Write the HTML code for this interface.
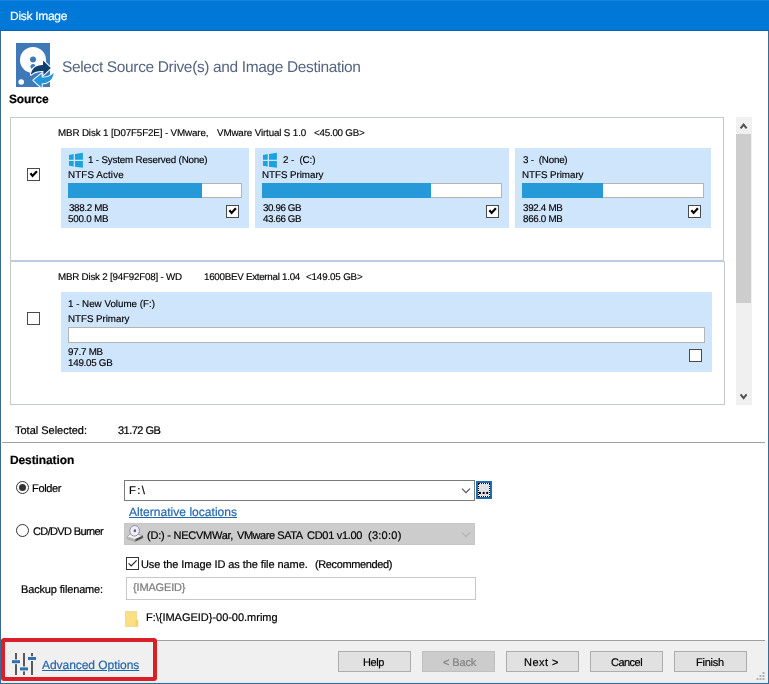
<!DOCTYPE html>
<html lang="en">
<head>
<meta charset="utf-8">
<title>Disk Image</title>
<style>
*{box-sizing:border-box;margin:0;padding:0}
html,body{width:769px;height:684px;overflow:hidden;background:#fff}
body{position:relative;font-family:"Liberation Sans",sans-serif;font-size:11px;color:#141414}
.abs,.t,svg{position:absolute}
.t{white-space:pre;line-height:1;color:#000;will-change:transform;text-rendering:geometricPrecision;-webkit-text-stroke:.2px currentColor}
#titlebar{left:0;top:0;width:769px;height:31px;background:#0078d7;border-bottom:1px solid #0a63b4;border-top:1px solid #1282dd}
#bl{left:0;top:31px;width:1px;height:653px;background:#3a6b94}
#br{left:768px;top:31px;width:1px;height:653px;background:#3a6b94}
#bb{left:0;top:683px;width:769px;height:1px;background:#3a6b94}
.panel{border:1px solid #c4c9ce;background:#fff}
.part{background:#cfe5fc}
.bar{height:15px;background:#fff;border:1px solid #b4b4b4}
.fill{position:absolute;left:-1px;top:-1px;bottom:-1px;background:#269ad8}
.cb{width:13px;height:13px;background:#fff;border:1px solid #4a4a4a}
.cb svg{left:0;top:0}
.radio{width:13px;height:13px;border-radius:50%;background:#fff;border:1px solid #333}
.btn{top:651px;width:73px;height:21px;background:#e1e1e1;border:1px solid #adadad}
.btn.dis{background:#cccccc;border-color:#bfbfbf}
#title{left:9.5px;top:10px;font-size:12px;letter-spacing:-0.29px;color:#fff}
#heading{left:62.0px;top:60px;font-size:15.5px;letter-spacing:-0.36px;color:#56657f;-webkit-text-stroke:0px currentColor}
#src{left:8.5px;top:93px;font-size:12px;letter-spacing:-0.22px;font-weight:700;color:#000}
#m1a{left:58.0px;top:129px;font-size:9.8px;letter-spacing:-0.14px;-webkit-text-stroke:.15px currentColor}
#m1b{left:216.5px;top:129px;font-size:9.8px;letter-spacing:-0.14px;-webkit-text-stroke:.15px currentColor}
#m1c{left:313.5px;top:129px;font-size:9.8px;letter-spacing:-0.24px;-webkit-text-stroke:.15px currentColor}
#p1n{left:88.0px;top:156px;font-size:9.8px;letter-spacing:-0.18px;-webkit-text-stroke:.15px currentColor}
#p1f{left:68.0px;top:171px;font-size:9.8px;letter-spacing:0.12px;-webkit-text-stroke:.15px currentColor}
#p1u{left:68.5px;top:204px;font-size:9.8px;letter-spacing:-0.34px;-webkit-text-stroke:.15px currentColor}
#p1s{left:67.5px;top:215px;font-size:9.8px;letter-spacing:-0.20px;-webkit-text-stroke:.15px currentColor}
#p2n{left:282.5px;top:156px;font-size:9.8px;letter-spacing:-0.09px;-webkit-text-stroke:.15px currentColor}
#p2f{left:262.0px;top:171px;font-size:9.8px;letter-spacing:-0.05px;-webkit-text-stroke:.15px currentColor}
#p2u{left:262.5px;top:204px;font-size:9.8px;letter-spacing:-0.41px;-webkit-text-stroke:.15px currentColor}
#p2s{left:262.5px;top:215px;font-size:9.8px;letter-spacing:-0.41px;-webkit-text-stroke:.15px currentColor}
#p3n{left:522.5px;top:156px;font-size:9.8px;letter-spacing:-0.22px;-webkit-text-stroke:.15px currentColor}
#p3f{left:522.0px;top:171px;font-size:9.8px;letter-spacing:-0.05px;-webkit-text-stroke:.15px currentColor}
#p3u{left:522.5px;top:204px;font-size:9.8px;letter-spacing:-0.31px;-webkit-text-stroke:.15px currentColor}
#p3s{left:522.5px;top:215px;font-size:9.8px;letter-spacing:-0.31px;-webkit-text-stroke:.15px currentColor}
#m2a{left:58.0px;top:273px;font-size:9.8px;letter-spacing:-0.22px;-webkit-text-stroke:.15px currentColor}
#m2b{left:203.5px;top:273px;font-size:9.8px;letter-spacing:-0.28px;-webkit-text-stroke:.15px currentColor}
#m2c{left:305.5px;top:273px;font-size:9.8px;letter-spacing:-0.16px;-webkit-text-stroke:.15px currentColor}
#d2n{left:68.0px;top:300px;font-size:9.8px;letter-spacing:-0.01px;-webkit-text-stroke:.15px currentColor}
#d2f{left:68.0px;top:315px;font-size:9.8px;letter-spacing:-0.05px;-webkit-text-stroke:.15px currentColor}
#d2u{left:68.0px;top:348px;font-size:9.8px;letter-spacing:-0.23px;-webkit-text-stroke:.15px currentColor}
#d2s{left:68.0px;top:359px;font-size:9.8px;letter-spacing:-0.26px;-webkit-text-stroke:.15px currentColor}
#totl{left:14.5px;top:426px;font-size:11px;letter-spacing:-0.01px}
#totv{left:117.5px;top:426px;font-size:11px;letter-spacing:-0.51px}
#dest{left:10.0px;top:454px;font-size:12px;letter-spacing:-0.11px;font-weight:700;color:#000}
#rf{left:31.5px;top:484px;font-size:11px;letter-spacing:-0.34px}
#fpath{left:128.5px;top:486px;font-size:11.3px;letter-spacing:1.35px}
#dots{left:478.0px;top:482px;font-size:14px;letter-spacing:-0.25px;font-weight:700;color:#000;-webkit-text-stroke:0px currentColor}
#alt{left:128.5px;top:506px;font-size:12px;letter-spacing:0.03px;color:#2466ad;text-decoration:underline;text-underline-offset:1px;text-decoration-thickness:1px}
#rc{left:32.5px;top:527px;font-size:11px;letter-spacing:-0.63px}
#cda{left:147.0px;top:531px;font-size:11px;letter-spacing:-0.24px}
#cdb{left:237.0px;top:531px;font-size:11px;letter-spacing:-0.44px}
#cdc{left:307.0px;top:531px;font-size:11px;letter-spacing:-0.29px}
#cdd{left:367.5px;top:531px;font-size:11px;letter-spacing:0.25px}
#usea{left:141.0px;top:560px;font-size:11px;letter-spacing:-0.08px}
#useb{left:314.5px;top:560px;font-size:11px;letter-spacing:-0.37px}
#bfl{left:21.0px;top:585px;font-size:11px;letter-spacing:-0.15px}
#bfv{left:132.5px;top:583px;font-size:11px;letter-spacing:-0.16px;color:#7a7a7a}
#fout{left:146.0px;top:613px;font-size:11px;letter-spacing:-0.02px}
#adv{left:41.5px;top:659px;font-size:12px;letter-spacing:-0.05px;color:#2466ad;text-decoration:underline;text-underline-offset:1px;text-decoration-thickness:1px}
#bhelp{left:363.0px;top:658px;font-size:11px;letter-spacing:-0.40px;color:#000}
#bback{left:443.0px;top:658px;font-size:11px;letter-spacing:-0.12px;color:#838383}
#bnext{left:524.0px;top:658px;font-size:11px;letter-spacing:0.48px;color:#000}
#bcanc{left:610.5px;top:658px;font-size:11px;letter-spacing:-0.52px;color:#000}
#bfin{left:695.5px;top:658px;font-size:11px;letter-spacing:-0.22px;color:#000}
</style>
</head>
<body>
<div class="abs" id="titlebar"></div>
<div class="t" id="title">Disk Image</div>
<div class="abs" id="bl"></div><div class="abs" id="br"></div>

<!-- header icon -->
<svg id="hdicon" style="left:14px;top:41px" width="44" height="50" viewBox="-2 -2 44 50">
  <rect x="0" y="0" width="34" height="44" fill="#4079b7"/>
  <circle cx="17" cy="17" r="13" fill="#fff"/>
  <circle cx="17" cy="16.5" r="3" fill="#4079b7"/>
  <circle cx="17" cy="23.5" r="2.5" fill="#4079b7"/>
  <circle cx="5.2" cy="39" r="2.8" fill="#fff"/>
  <path d="M14.9 31.8 C15.4 25.2 20.4 21.7 27 21.9 L27 17.6 L34.8 25 L27.4 32 L27.4 28 C22.4 27.8 18 28.7 14.9 31.8 Z" fill="#0f3f6e" stroke="#fff" stroke-width="2" stroke-linejoin="round" paint-order="stroke"/>
  <path d="M37.6 29.8 C37.2 36.8 32 40.5 25.7 40.4 L25.7 44.7 L17.4 37.3 L25.7 30.6 L25.7 34.6 C30.6 34.8 34.6 33.6 37.6 29.8 Z" fill="#2396d9" stroke="#fff" stroke-width="2" stroke-linejoin="round" paint-order="stroke"/>
</svg>
<div class="t" id="heading">Select Source Drive(s) and Image Destination</div>
<div class="t" id="src">Source</div>

<!-- disk 1 -->
<div class="abs panel" style="left:10px;top:117px;width:714px;height:144px;border-bottom-color:#b9cce0"></div>
<div class="t" id="m1a">MBR Disk 1 [D07F5F2E] - VMware,</div><div class="t" id="m1b">VMware Virtual S 1.0</div><div class="t" id="m1c">&lt;45.00 GB&gt;</div>
<div class="abs cb" style="left:27px;top:168px"><svg width="11" height="11" viewBox="0 0 11 11"><path d="M2.4 4.3 L4.6 6.9 L8.9 2.3" fill="none" stroke="#000" stroke-width="2.2"/></svg></div>

<div class="abs part" style="left:61px;top:148px;width:188px;height:80px"></div>
<svg class="wl" style="left:68px;top:152px" width="16" height="17" viewBox="0 0 16 17"><path d="M1 2.9 L5.7 2.1 L5.7 7.8 L1 7.8 Z M7 1.9 L14.9 0.8 L14.9 7.8 L7 7.8 Z M1 8.9 L5.7 8.9 L5.7 14.5 L1 13.8 Z M7 8.9 L14.9 8.9 L14.9 15.8 L7 14.7 Z" fill="#1ba3e0"/></svg>
<div class="t" id="p1n">1 - System Reserved (None)</div><div class="t" id="p1f">NTFS Active</div>
<div class="abs bar" style="left:68px;top:183px;width:174px"><div class="fill" style="width:134px"></div></div>
<div class="t" id="p1u">388.2 MB</div><div class="t" id="p1s">500.0 MB</div>
<div class="abs cb" style="left:226px;top:205px"><svg width="11" height="11" viewBox="0 0 11 11"><path d="M2.4 4.3 L4.6 6.9 L8.9 2.3" fill="none" stroke="#000" stroke-width="2.2"/></svg></div>

<div class="abs part" style="left:255px;top:148px;width:254px;height:80px"></div>
<svg class="wl" style="left:262px;top:152px" width="16" height="17" viewBox="0 0 16 17"><path d="M1 2.9 L5.7 2.1 L5.7 7.8 L1 7.8 Z M7 1.9 L14.9 0.8 L14.9 7.8 L7 7.8 Z M1 8.9 L5.7 8.9 L5.7 14.5 L1 13.8 Z M7 8.9 L14.9 8.9 L14.9 15.8 L7 14.7 Z" fill="#1ba3e0"/></svg>
<div class="t" id="p2n">2 -  (C:)</div><div class="t" id="p2f">NTFS Primary</div>
<div class="abs bar" style="left:262px;top:183px;width:240px"><div class="fill" style="width:169px"></div></div>
<div class="t" id="p2u">30.96 GB</div><div class="t" id="p2s">43.66 GB</div>
<div class="abs cb" style="left:486px;top:205px"><svg width="11" height="11" viewBox="0 0 11 11"><path d="M2.4 4.3 L4.6 6.9 L8.9 2.3" fill="none" stroke="#000" stroke-width="2.2"/></svg></div>

<div class="abs part" style="left:515px;top:148px;width:196px;height:80px"></div>
<div class="t" id="p3n">3 -  (None)</div><div class="t" id="p3f">NTFS Primary</div>
<div class="abs bar" style="left:522px;top:183px;width:182px"><div class="fill" style="width:81px"></div></div>
<div class="t" id="p3u">392.4 MB</div><div class="t" id="p3s">866.0 MB</div>
<div class="abs cb" style="left:688px;top:205px"><svg width="11" height="11" viewBox="0 0 11 11"><path d="M2.4 4.3 L4.6 6.9 L8.9 2.3" fill="none" stroke="#000" stroke-width="2.2"/></svg></div>

<!-- disk 2 -->
<div class="abs panel" style="left:10px;top:261px;width:715px;height:144px;border-top-color:#b9cce0"></div>
<div class="t" id="m2a">MBR Disk 2 [94F92F08] - WD</div><div class="t" id="m2b">1600BEV External 1.04</div><div class="t" id="m2c">&lt;149.05 GB&gt;</div>
<div class="abs cb" style="left:27px;top:312px"></div>
<div class="abs part" style="left:61px;top:292px;width:651px;height:80px"></div>
<div class="t" id="d2n">1 - New Volume (F:)</div><div class="t" id="d2f">NTFS Primary</div>
<div class="abs bar" style="left:68px;top:327px;width:637px;height:16px"></div>
<div class="t" id="d2u">97.7 MB</div><div class="t" id="d2s">149.05 GB</div>
<div class="abs cb" style="left:689px;top:349px"></div>

<!-- scrollbar -->
<div class="abs" style="left:736px;top:117px;width:16px;height:288px;background:#f0f0f0"></div>
<div class="abs" style="left:736px;top:134px;width:15px;height:169px;background:#cdcdcd"></div>
<svg style="left:736px;top:117px" width="16" height="17" viewBox="0 0 16 17"><path d="M4.6 11.4 L7.6 7.6 L10.6 11.4" fill="none" stroke="#505050" stroke-width="2" stroke-linejoin="miter"/></svg>
<svg style="left:736px;top:388px" width="16" height="17" viewBox="0 0 16 17"><path d="M4.6 6.4 L7.6 10.2 L10.6 6.4" fill="none" stroke="#505050" stroke-width="2" stroke-linejoin="miter"/></svg>

<div class="t" id="totl">Total Selected:</div><div class="t" id="totv">31.72 GB</div>
<div class="abs" style="left:2px;top:442px;width:763px;height:1px;background:#a0a0a0"></div>

<!-- destination -->
<div class="t" id="dest">Destination</div>
<div class="abs radio" style="left:16px;top:481px"><div class="abs" style="left:2px;top:2px;width:7px;height:7px;border-radius:50%;background:#333"></div></div>
<div class="t" id="rf">Folder</div>
<div class="abs" style="left:124px;top:480px;width:351px;height:21px;background:#fff;border:1px solid #7a7a7a"></div>
<div class="t" id="fpath">F:\</div>
<svg style="left:460px;top:486px" width="12" height="9" viewBox="0 0 12 9"><path d="M2 2.6 L6 6.6 L10 2.6" fill="none" stroke="#555" stroke-width="1.2"/></svg>
<div class="abs" style="left:476px;top:481px;width:16px;height:18px;background:#e1e1e1;border:2px solid #1c6bb6"><div class="abs" style="left:0;top:0;width:12px;height:14px;border:1px solid #fff"></div><div class="abs" style="left:0;top:0;width:12px;height:14px;border:1px dotted #000"></div></div><div class="t" id="dots">...</div>
<div class="t" id="alt">Alternative locations</div>
<div class="abs radio" style="left:16px;top:524px"></div>
<div class="t" id="rc">CD/DVD Burner</div>
<div class="abs" style="left:124px;top:523px;width:351px;height:22px;background:#cccccc;border:1px solid #c6c6c6"></div>
<svg id="cdicon" style="left:126px;top:525px" width="18" height="18" viewBox="0 0 18 18">
  <path d="M1.4 11.4 L5.4 8 L16.8 10.6 L16.8 13 L9.2 16.6 L1.4 13.6 Z" fill="#f3f3f3" stroke="#8a8a8a" stroke-width="0.7"/>
  <path d="M9.2 14 L16.8 10.6 L16.8 13 L9.2 16.6 Z" fill="#4e4e4e"/>
  <path d="M1.4 11.4 L9.2 14 L9.2 16.6 L1.4 13.6 Z" fill="#b4b4b4"/>
  <ellipse cx="8.6" cy="5.8" rx="4.8" ry="5.3" fill="#efedf8" stroke="#8d8aa6" stroke-width="0.9" transform="rotate(12 8.6 5.8)"/>
  <ellipse cx="8.9" cy="5.7" rx="1.2" ry="1.5" fill="#5f5d80" transform="rotate(12 8.9 5.7)"/>
</svg>
<div class="t" id="cda">(D:) - NECVMWar,</div><div class="t" id="cdb">VMware SATA</div><div class="t" id="cdc">CD01 v1.00</div><div class="t" id="cdd">(3:0:0)</div>
<svg style="left:460px;top:530px" width="12" height="9" viewBox="0 0 12 9"><path d="M2 2.6 L6 6.6 L10 2.6" fill="none" stroke="#b2b2b2" stroke-width="1.2"/></svg>
<div class="abs cb" style="left:126px;top:557px;border-color:#333"><svg width="11" height="11" viewBox="0 0 11 11"><path d="M1.6 5.4 L4.2 8 L9.6 2.4" fill="none" stroke="#222" stroke-width="1.2"/></svg></div>
<div class="t" id="usea">Use the Image ID as the file name.</div><div class="t" id="useb">(Recommended)</div>
<div class="t" id="bfl">Backup filename:</div>
<div class="abs" style="left:126px;top:577px;width:350px;height:23px;background:#fff;border:1px solid #c8c8c8"></div>
<div class="t" id="bfv">{IMAGEID}</div>
<svg id="foldicon" style="left:125px;top:611px" width="14" height="16" viewBox="0 0 14 16"><path d="M0.4 0.4 L11.6 0.4 L11.6 9.2 L12.8 9.2 L12.8 15.6 L0.4 15.6 Z" fill="#fbe083" stroke="#e8d488" stroke-width="0.8"/><path d="M10.6 9.4 L12.6 9.4 L12.6 15.4 L10.6 15.4 Z" fill="#f2d15e"/></svg>
<div class="t" id="fout">F:\{IMAGEID}-00-00.mrimg</div>

<!-- bottom bar -->
<div class="abs" style="left:1px;top:640px;width:767px;height:43px;background:#f0f0f0"></div>
<div class="abs" style="left:1px;top:640px;width:764px;height:1px;background:#a0a0a0"></div>
<div class="abs" style="left:1px;top:638px;width:156px;height:43px;border:4px solid #da1f28;border-radius:3px;background:#f0f0f0"></div>
<svg id="sliders" style="left:11px;top:652px" width="27" height="24" viewBox="0 0 27 24">
  <g fill="#595959"><rect x="4" y="1" width="2" height="6.4"/><rect x="4" y="12.2" width="2" height="10.8"/>
  <rect x="12" y="1" width="2" height="13.4"/><rect x="12" y="19.4" width="2" height="3.6"/>
  <rect x="20" y="1" width="2" height="3.2"/><rect x="20" y="9" width="2" height="14"/></g>
  <g fill="#3273ae"><rect x="1" y="8.2" width="8" height="3"/><rect x="9" y="15.4" width="8" height="3"/><rect x="17" y="5" width="8" height="3"/></g>
</svg>
<div class="t" id="adv">Advanced Options</div>
<div class="abs btn" style="left:338px"></div><div class="t" id="bhelp">Help</div>
<div class="abs btn dis" style="left:422px"></div><div class="t" id="bback">&lt; Back</div>
<div class="abs btn" style="left:506px"></div><div class="t" id="bnext">Next &gt;</div>
<div class="abs btn" style="left:590px"></div><div class="t" id="bcanc">Cancel</div>
<div class="abs btn" style="left:674px"></div><div class="t" id="bfin">Finish</div>
<svg id="grip" style="left:755px;top:671px" width="12" height="12" viewBox="0 0 12 12"><g fill="#b4b4b4"><rect x="7.5" y="1" width="2" height="2"/><rect x="4.5" y="4" width="2" height="2"/><rect x="7.5" y="4" width="2" height="2"/><rect x="1.5" y="7" width="2" height="2"/><rect x="4.5" y="7" width="2" height="2"/><rect x="7.5" y="7" width="2" height="2"/></g></svg>
<div class="abs" style="left:1px;top:682px;width:767px;height:1px;background:#d9eef8"></div>
<div class="abs" id="bb"></div>
</body>
</html>
